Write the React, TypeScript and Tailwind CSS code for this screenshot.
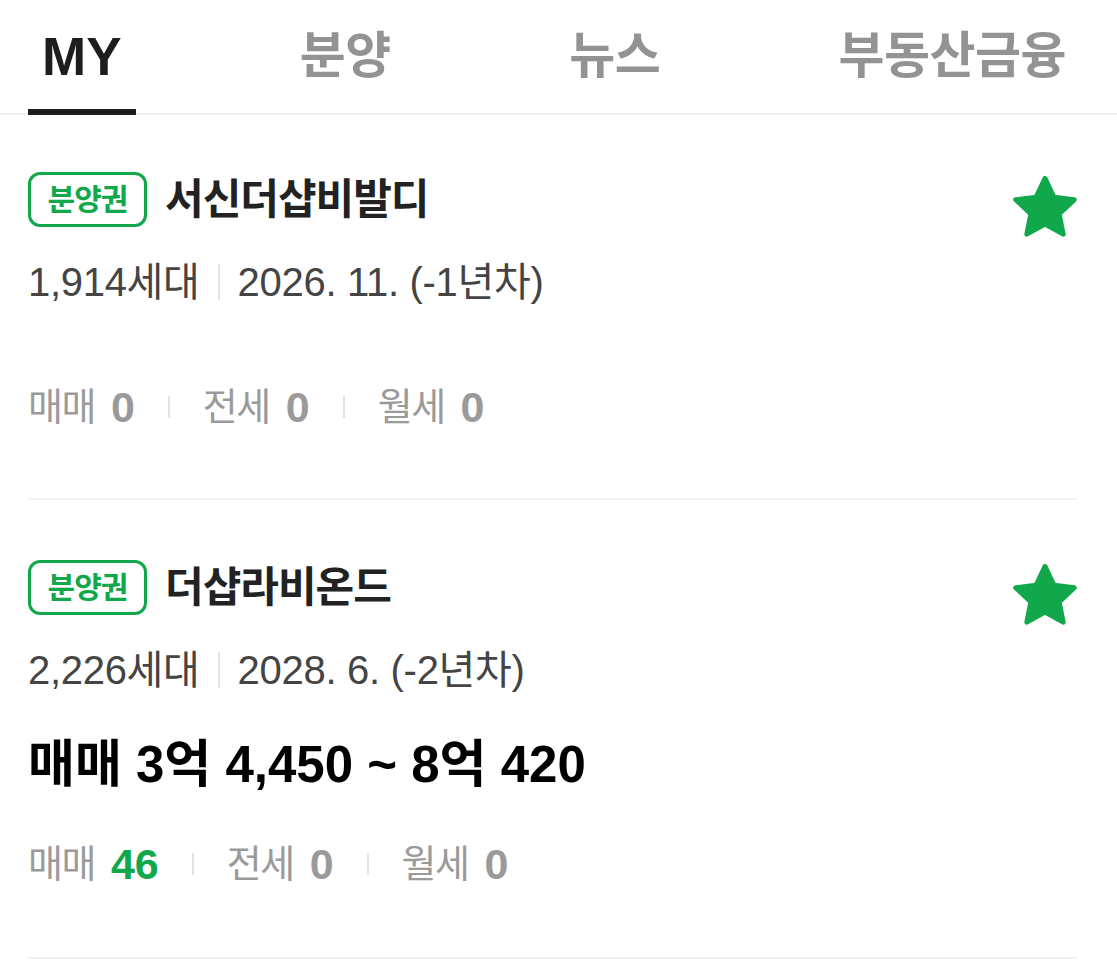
import React from 'react';

const GREEN = '#11a84b';

const tabs = ['MY', '분양', '뉴스', '부동산금융'];

const StarIcon: React.FC = () => (
  <svg width="74" height="74" viewBox="0 0 24 24" className="shrink-0">
    <path
      d="M12 2.4l2.9 6.1 6.6.8-4.9 4.6 1.3 6.6L12 17.2l-5.9 3.3 1.3-6.6-4.9-4.6 6.6-.8z"
      fill={GREEN}
      stroke={GREEN}
      strokeWidth="1.6"
      strokeLinejoin="round"
    />
  </svg>
);

const Sep: React.FC = () => <span className="mx-[33px] inline-block h-[22px] w-[2px] bg-[#e3e3e3]" />;

interface CountsProps {
  sale: number;
  jeonse: number;
  monthly: number;
}

const Counts: React.FC<CountsProps> = ({ sale, jeonse, monthly }) => (
  <div className="flex h-[50px] items-center text-[38px] tracking-[-1.5px] text-[#9a9a9a]">
    <span>매매</span>
    <span className={`ml-[16px] text-[43px] font-bold tracking-normal ${sale > 0 ? 'text-[#11a84b]' : ''}`}>
      {sale}
    </span>
    <Sep />
    <span>전세</span>
    <span className="ml-[16px] text-[43px] font-bold tracking-normal">{jeonse}</span>
    <Sep />
    <span>월세</span>
    <span className="ml-[16px] text-[43px] font-bold tracking-normal">{monthly}</span>
  </div>
);

interface CardProps {
  name: string;
  units: string;
  date: string;
  price?: string;
  sale: number;
  first?: boolean;
}

const Card: React.FC<CardProps> = ({ name, units, date, price, sale, first }) => (
  <div className={`border-b-2 border-[#f1f1f1] ${first ? 'pt-[57px] pb-[66px]' : 'pt-[60px] pb-[68px]'}`}>
    <div className="flex h-[55px] items-center justify-between">
      <div className="flex items-center">
        <span className="flex h-[55px] w-[119px] items-center justify-center rounded-[12px] border-[3px] border-[#11a84b] text-[30px] font-bold tracking-[-1px] text-[#11a84b]">
          분양권
        </span>
        <span className="ml-[18px] text-[42px] font-bold tracking-[-1px] text-[#222]">{name}</span>
      </div>
      <div className="mr-[-5px] mt-[17px]">
        <StarIcon />
      </div>
    </div>
    <div className="mt-[30px] flex h-[50px] items-center text-[40px] tracking-[-0.3px] text-[#444]">
      <span>{units}</span>
      <span className="mx-[18px] inline-block h-[36px] w-[2px] bg-[#e3e3e3]" />
      <span>{date}</span>
    </div>
    {price ? (
      <>
        <div className="mt-[45px] flex h-[50px] items-center text-[51px] font-bold text-black">{price}</div>
        <div className="mt-[49px]">
          <Counts sale={sale} jeonse={0} monthly={0} />
        </div>
      </>
    ) : (
      <div className="mt-[75px]">
        <Counts sale={sale} jeonse={0} monthly={0} />
      </div>
    )}
  </div>
);

export default function App() {
  return (
    <div
      className="min-h-[967px] w-[1117px] bg-white"
      style={{ fontFamily: '"Liberation Sans", "Noto Sans CJK KR", sans-serif' }}
    >
      <div className="border-b-2 border-[#f1f1f1]">
        <div className="flex h-[113px] items-stretch justify-between pl-[28px] pr-[37px]">
          {tabs.map((t, i) => (
            <div key={t} className="relative flex items-center px-[14px]">
              <span
                className={
                  i === 0
                    ? 'text-[53px] font-bold text-[#1d1d1d]'
                    : 'text-[50px] font-bold tracking-[-0.5px] text-[#939393]'
                }
              >
                {t}
              </span>
              {i === 0 && <span className="absolute bottom-[-2px] left-0 right-0 h-[6px] bg-[#1d1d1d]" />}
            </div>
          ))}
        </div>
      </div>
      <div className="pl-[28px] pr-[40px]">
        <Card first name="서신더샵비발디" units="1,914세대" date="2026. 11. (-1년차)" sale={0} />
        <Card
          name="더샵라비온드"
          units="2,226세대"
          date="2028. 6. (-2년차)"
          price="매매 3억 4,450 ~ 8억 420"
          sale={46}
        />
      </div>
    </div>
  );
}
